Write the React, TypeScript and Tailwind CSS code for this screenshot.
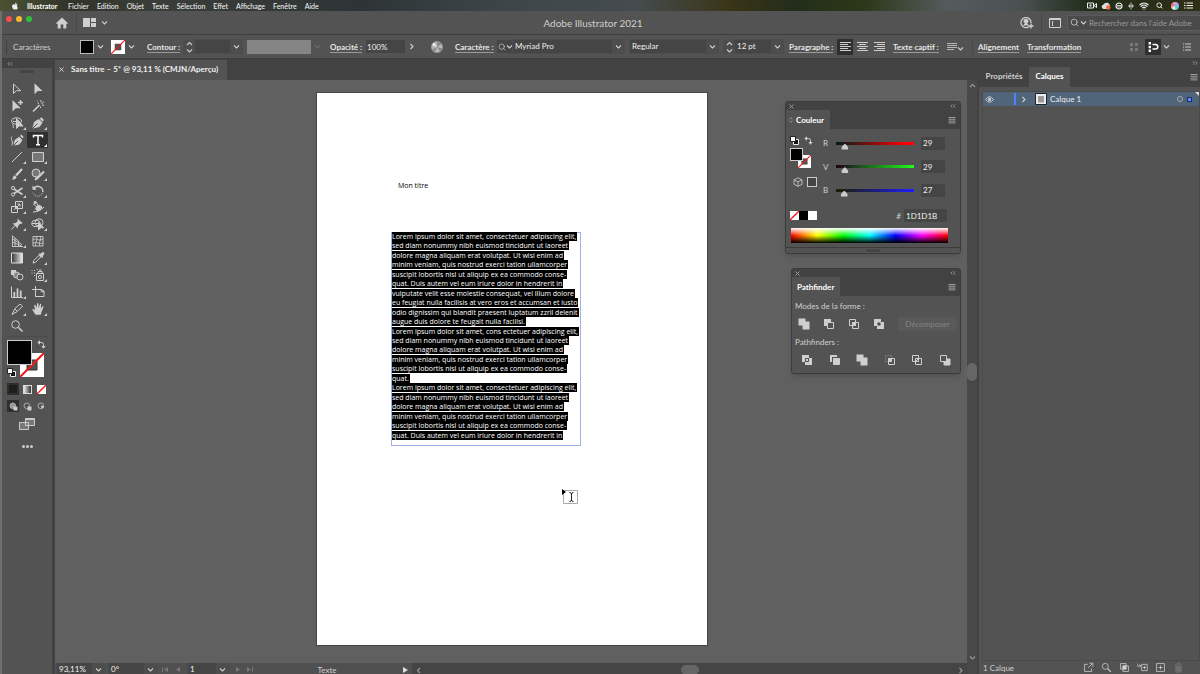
import type { ReactNode } from 'react';
import { Search, Wifi } from 'lucide-react';
import { FaApple } from 'react-icons/fa';

const menus = ['Fichier', 'Edition', 'Objet', 'Texte', 'Sélection', 'Effet', 'Affichage', 'Fenêtre', 'Aide'];

const lines = [
  'Lorem ipsum dolor sit amet, consectetuer adipiscing elit,',
  'sed diam nonummy nibh euismod tincidunt ut laoreet',
  'dolore magna aliquam erat volutpat. Ut wisi enim ad',
  'minim veniam, quis nostrud exerci tation ullamcorper',
  'suscipit lobortis nisl ut aliquip ex ea commodo conse-',
  'quat. Duis autem vel eum iriure dolor in hendrerit in',
  'vulputate velit esse molestie consequat, vel illum dolore',
  'eu feugiat nulla facilisis at vero eros et accumsan et iusto',
  'odio dignissim qui blandit praesent luptatum zzril delenit',
  'augue duis dolore te feugait nulla facilisi.',
  'Lorem ipsum dolor sit amet, cons ectetuer adipiscing elit,',
  'sed diam nonummy nibh euismod tincidunt ut laoreet',
  'dolore magna aliquam erat volutpat. Ut wisi enim ad',
  'minim veniam, quis nostrud exerci tation ullamcorper',
  'suscipit lobortis nisl ut aliquip ex ea commodo conse-',
  'quat.',
  'Lorem ipsum dolor sit amet, consectetuer adipiscing elit,',
  'sed diam nonummy nibh euismod tincidunt ut laoreet',
  'dolore magna aliquam erat volutpat. Ut wisi enim ad',
  'minim veniam, quis nostrud exerci tation ullamcorper',
  'suscipit lobortis nisl ut aliquip ex ea commodo conse-',
  'quat. Duis autem vel eum iriure dolor in hendrerit in',
];

function Chevron({ dir = 'down', className = '' }: { dir?: 'down' | 'up' | 'left' | 'right'; className?: string }) {
  const d = {
    down: 'M1 2.5 3.5 5 6 2.5',
    up: 'M1 5 3.5 2.5 6 5',
    left: 'M5 1 2.5 3.5 5 6',
    right: 'M2.5 1 5 3.5 2.5 6',
  }[dir];
  return (
    <svg viewBox="0 0 7 7" className={`h-[7px] w-[7px] shrink-0 ${className}`} fill="none" stroke="currentColor" strokeWidth="1.1">
      <path d={d} />
    </svg>
  );
}

function Icon({ children, className = 'h-[14px] w-[14px]' }: { children: ReactNode; className?: string }) {
  return (
    <svg viewBox="0 0 14 14" className={`shrink-0 ${className}`} fill="none" stroke="currentColor" strokeWidth="1">
      {children}
    </svg>
  );
}

function Pick({ label, value, className = '' }: { label: string; value: string; className?: string }) {
  return (
    <div className={`flex h-[13px] shrink-0 items-center bg-[#454545] ring-1 ring-[#4c4c4c] ${className}`}>
      <select aria-label={label} className="h-full min-w-0 flex-1 appearance-none bg-transparent pl-[2px] leading-[13px] text-[#f0f0f0] outline-none">
        <option>{value}</option>
      </select>
      <span className="flex h-full w-[12px] items-center justify-center bg-[#4d4d4d]">
        <Chevron />
      </span>
    </div>
  );
}

function Stepper({ label }: { label: string }) {
  return (
    <button aria-label={label} className="flex h-[14px] w-[12px] shrink-0 flex-col items-center justify-center bg-[#4d4d4d]">
      <Chevron dir="up" />
      <Chevron />
    </button>
  );
}

function NoneSwatch({ className }: { className: string }) {
  return (
    <svg viewBox="0 0 12 12" className={`shrink-0 bg-white ${className}`}>
      <path d="M0 12 12 0" stroke="#f01818" strokeWidth="1.8" />
    </svg>
  );
}

function StrokeSwatch({ className }: { className: string }) {
  return (
    <svg viewBox="0 0 24 24" className={`shrink-0 ${className}`}>
      <path d="M0 0h24v24H0z" fill="#fff" />
      <path d="M7 7h10v10H7z" fill="#535353" stroke="#333" />
      <path d="M0 24 24 0" stroke="#f01818" strokeWidth="2" />
    </svg>
  );
}

function Defaults({ className = '' }: { className?: string }) {
  return (
    <svg viewBox="0 0 9 9" className={`h-[9px] w-[9px] shrink-0 ${className}`}>
      <path d="M3.5 3.5h5v5h-5z" fill="#111" stroke="#eee" />
      <path d="M.5.5h5v5h-5z" fill="#fff" stroke="#222" />
    </svg>
  );
}

function Swap({ className = '' }: { className?: string }) {
  return (
    <svg viewBox="0 0 9 9" className={`h-[9px] w-[9px] shrink-0 ${className}`} fill="none" stroke="currentColor">
      <path d="M2 2.5h2.5q2 0 2 2V7" />
      <path d="M3 .3.3 2.5 3 4.7zM4.4 6h4.2L6.5 8.8z" fill="currentColor" stroke="none" />
    </svg>
  );
}

const Menu = () => (
  <svg viewBox="0 0 8 8" className="h-[8px] w-[8px] text-[#a8a8a8]" stroke="currentColor" strokeWidth=".9">
    <path d="M.5 1.5h7M.5 3.3h7M.5 5.1h7M.5 6.9h7" />
  </svg>
);

// Toolbox, two per row
const tools: { name: string; more?: boolean; on?: boolean; draw: ReactNode }[] = [
  { name: 'Sélection', draw: <path d="M3.5 2v9.5l3-2.8h4.2z" /> },
  { name: 'Sélection directe', draw: <path d="M3.5 1.2v11l3.2-3.2h4.8z" fill="currentColor" stroke="none" /> },
  { name: 'Sélection directe progressive', draw: <><path d="M2.5 1v11.5l3.3-3.3h5z" fill="currentColor" stroke="none" /><path d="M10.5 1v5M8 3.5h5" strokeWidth="1.4" /></> },
  { name: 'Baguette magique', draw: <><path d="M2 12.5 8.5 6" strokeWidth="1.6" /><path d="M10 1v2.5M8 5 6.5 3.5M10.5 4.8 13 2.8M11 6.2h2.2M9.5 7.5V9M6 1.5l.8.8" /></> },
  { name: 'Lasso', more: true, draw: <><ellipse cx="6.5" cy="5" rx="5" ry="3.2" /><path d="M3.5 7.2c-2 1.5 1 3-.5 5M3 5.5h5" /><path d="M6.5 2.5v10l2.5-2.6 4 .1z" fill="currentColor" /></> },
  { name: 'Plume', more: true, draw: <><path d="m2 12 1.5-6L8 3.5 11 6.5 8.5 10.5z" fill="currentColor" /><path d="m8.8 2.8 1.5-1.5 2.7 2.7-1.5 1.5z" fill="currentColor" stroke="none" /><path d="M2 12 6.5 7.5" stroke="#535353" /></> },
  { name: 'Courbure', draw: <><path d="M1.5 12.5c3-3-2-7 .5-9" /><path d="m4 12 1.2-5 4-2.7 2.8 2.8-2.8 4z" fill="currentColor" /><path d="m10 3 1.2-1.5 2.5 2.5L12.5 5.3z" fill="currentColor" stroke="none" /><path d="M4 12 8 8" stroke="#535353" /></> },
  { name: 'Texte', more: true, on: true, draw: <path d="M2.5 4.5v-2h9v2M7 2.5v9.2M5 11.7h4" strokeWidth="1.5" /> },
  { name: 'Trait', more: true, draw: <path d="M2 12 12 2" /> },
  { name: 'Rectangle', more: true, draw: <path d="M1.5 2.5h11v9h-11z" fill="#777" /> },
  { name: 'Pinceau', more: true, draw: <><path d="M6 8.5 12 2" strokeWidth="2.2" /><path d="M1.5 12.5c2-.5 1-3 3-4.2l2.2 2c-.7 2-3.3 2.6-5.2 2.2z" fill="currentColor" stroke="none" /></> },
  { name: 'Shaper', more: true, draw: <><circle cx="5" cy="6" r="4" fill="#777" /><path d="M6 11.5 13 4.5" strokeWidth="2.2" /><path d="m4 13 1-2.5 1.5 1.5z" fill="currentColor" /></> },
  { name: 'Ciseaux', more: true, draw: <><path d="M4 5 12.5 10.5M4 9.5 12.5 4" strokeWidth="1.5" /><circle cx="3" cy="4" r="1.6" /><circle cx="3" cy="10.5" r="1.6" /></> },
  { name: 'Rotation', more: true, draw: <><path d="M3 4.2a5 5 0 0 1 8.8 4" strokeWidth="1.4" /><path d="M11.5 9A5 5 0 0 1 2 8.5" strokeDasharray="1 1" /><path d="M1.5 1.5v4.2h4.2z" fill="currentColor" stroke="none" /></> },
  { name: 'Mise à l’échelle', more: true, draw: <path d="M5.5 1.5h7v7h-7zM1.5 6.5h6v6h-6zM4 10l6-6M7.3 4H10v2.7" /> },
  { name: 'Largeur', more: true, draw: <><path d="M2 12c5 0 8-2 11-5M2 4c3 1 4 4 8 6M5 1.5l2 4-3 4" /><path d="m5 7 3-2 3 2-2 3-3 1z" fill="currentColor" /><circle cx="4" cy="2.5" r="1" fill="currentColor" /></> },
  { name: 'Punaise', more: true, draw: <><path d="m7.5 1.5 5 4.5-1.2 1-1.2-.2L8 9l-.3 2.5-5-5L5.5 6 8 4l-.5-1z" fill="currentColor" stroke="none" /><path d="M5 8.5 1.5 12.5" /></> },
  { name: 'Concepteur de formes', more: true, draw: <><ellipse cx="5" cy="6.5" rx="4.2" ry="3.2" /><ellipse cx="8" cy="5.5" rx="4" ry="3.7" /><path d="M1 6.5h7" /><path d="M7.5 5v8l2-2.2h3.2z" fill="currentColor" /></> },
  { name: 'Grille de perspective', more: true, draw: <path d="M2.5 1.5v11M2 12.5h11M2.5 2 8.5 7v5.5M2.5 5l9.5 5.5M2.5 8 12 12.3M5 3.8v8.7" strokeWidth=".9" /> },
  { name: 'Filet', draw: <path d="M2 2.5h10v9.5H2zM2 6c4-3 5 2 10-1M2 9.5c4-3 6 2 10-1M5 2.5c3 3-2 6 0 9.5M9 2.5c2 3-2 6 0 9.5" strokeWidth=".9" /> },
  { name: 'Dégradé', draw: <path d="M1.5 2h11v10h-11z" fill="url(#tool-fade)" stroke="#ddd" /> },
  { name: 'Pipette', more: true, draw: <><path d="m2 12 .8-2.5L8 4.3 9.8 6 4.5 11.3z" /><path d="m7.5 3.2 1.2-1 .8.6c1-1.6 3-2 3.5-1.2s.2 2.5-1.4 3.5l.6 1-1.2 1z" fill="currentColor" stroke="none" /></> },
  { name: 'Dégradé de formes', draw: <><path d="M1 2h5v5H1z" fill="currentColor" stroke="none" /><circle cx="6.5" cy="7" r="3" fill="#888" /><circle cx="10" cy="9" r="3" fill="#535353" /></> },
  { name: 'Pulvérisation de symboles', more: true, draw: <><path d="M5.5 5.5h7v7h-7zM7 3.5h4v2H7zM8 2h2.5" /><circle cx="9" cy="9" r="1.6" /><path d="M.5 2.5h1M3 2.5h1M.5 5h1M3 5h1M3 7.5h1M5.5 1.5h1" strokeWidth="1.2" /></> },
  { name: 'Graphe', more: true, draw: <><path d="M1.5 1.5v11H13" /><path d="M4.3 12V7M7.5 12V3.5M10.7 12V5.5" strokeWidth="1.8" /></> },
  { name: 'Plan de travail', draw: <path d="M4.5 1v10.5h8.5V6L10.5 4.5H1M10.3 4.5V6.8H13" /> },
  { name: 'Tranche', more: true, draw: <><path d="m2 12.5 3-6L10 2l2.5 2.2-5.2 5.3z" /><path d="M5 7l2 2" /></> },
  { name: 'Main', more: true, draw: <path d="M4.5 12.8 1.5 8c-.4-1 .6-1.4 1.3-.7L4 8.3 3.2 3.5c0-1 1.2-1 1.4-.2L5.7 6 6 1.8c.1-1 1.4-1 1.5 0L7.8 6l1-3.6c.3-1 1.5-.7 1.4.2L9.8 6.6l1.5-2c.5-.8 1.5-.3 1.2.5L10.5 10 9.8 12.8z" fill="currentColor" stroke="none" /> },
  { name: 'Zoom', draw: <><circle cx="5.5" cy="5.5" r="3.8" /><path d="m8.5 8.5 4 4" strokeWidth="1.6" /></> },
];

function Toolbox() {
  return (
    <aside className="flex w-[50px] shrink-0 flex-col bg-[#535353] text-[#cfcfcf]">
      <svg className="absolute h-0 w-0">
        <defs>
          <linearGradient id="tool-fade">
            <stop offset="0" stopColor="#333" />
            <stop offset="1" stopColor="#eee" />
          </linearGradient>
        </defs>
      </svg>
      <div className="flex h-[9px] items-center bg-[#424242] pl-[5px] text-[#999]">
        <Collapse dir="left" />
      </div>
      <div className="mx-auto mt-[2px] h-[3px] w-[14px] bg-[#444]" />
      <div className="mt-2 grid h-[253px] auto-rows-fr grid-cols-[21px_21px] pl-1">
        {tools.map((t) => (
          <button key={t.name} aria-label={t.name} className={`grid place-items-center ${t.on ? 'bg-[#2f2f2f] text-white' : ''}`}>
            <span className="relative">
              <Icon>{t.draw}</Icon>
              {t.more && (
                <svg viewBox="0 0 3 3" className="absolute -right-[2px] bottom-0 h-[3px] w-[3px]">
                  <path d="M3 0v3H0z" fill="currentColor" />
                </svg>
              )}
            </span>
          </button>
        ))}
      </div>
      <div className="mx-1 mt-[2px] border-t border-[#4b4b4b]" />
      <div className="relative mx-[5px] mt-[3px] h-[37px]">
        <span className="absolute top-0 left-0 z-10 h-[25px] w-[25px] border border-[#ccc] bg-black" />
        <StrokeSwatch className="absolute top-[13px] left-[13px] h-[24px] w-[24px]" />
        <Swap className="absolute top-0 right-px" />
        <Defaults className="absolute bottom-0 left-0" />
      </div>
      <div className="mt-[6px] flex gap-[2px] pl-[5px]">
        <button aria-label="Couleur" className="grid h-[12px] w-[12px] place-items-center bg-[#2f2f2f]">
          <span className="h-2 w-2 bg-[#1d1d1b]" />
        </button>
        <button aria-label="Dégradé linéaire" className="grid h-[12px] w-[12px] place-items-center">
          <span className="h-[9px] w-[9px] border border-[#ddd] bg-linear-to-r from-[#eee] to-[#333]" />
        </button>
        <button aria-label="Sans" className="grid h-[12px] w-[12px] place-items-center">
          <NoneSwatch className="h-[9px] w-[9px]" />
        </button>
      </div>
      <div className="mt-[5px] flex gap-[2px] pl-[5px]">
        {['Dessin normal', 'Dessin arrière', 'Dessin intérieur'].map((n, i) => (
          <button key={n} aria-label={n} className={`grid h-[12px] w-[12px] place-items-center ${i === 0 ? 'bg-[#2f2f2f]' : ''}`}>
            <svg viewBox="0 0 9 9" className="h-[9px] w-[9px]">
              <circle cx="3.8" cy="3.8" r="2.8" fill={i === 0 ? '#999' : 'none'} stroke="#aaa" />
              {i < 2 && <path d="M4.5 4.5h4v4h-4z" fill="#ccc" />}
              {i === 2 && <path d="M3.8 3.8h3v2l-2 1z" fill="#ccc" />}
            </svg>
          </button>
        ))}
      </div>
      <button aria-label="Mode d’affichage" className="mx-auto mt-[6px]">
        <svg viewBox="0 0 16 12" className="h-[12px] w-[16px]" fill="#777" stroke="#ccc">
          <path d="M.5 4.5h9v7h-9zM6.5.5h9v7h-9z" />
          <path d="M6.5 1.2h9" strokeWidth="1.5" />
        </svg>
      </button>
      <button aria-label="Modifier la barre d’outils" className="mx-auto mt-[11px] flex gap-[1px] py-1">
        {[0, 1, 2].map((i) => (
          <span key={i} className="h-[3px] w-[3px] rounded-full bg-[#ccc]" />
        ))}
      </button>
    </aside>
  );
}

function Collapse({ dir }: { dir: 'left' | 'right' }) {
  return (
    <svg viewBox="0 0 6 4" className="h-[4px] w-[6px]" fill="none" stroke="currentColor" strokeWidth=".9">
      {dir === 'left' ? <path d="M2.5.3.8 2l1.7 1.7M5.2.3 3.5 2l1.7 1.7" /> : <path d="M.8.3 2.5 2 .8 3.7M3.5.3 5.2 2 3.5 3.7" />}
    </svg>
  );
}

function MacMenuBar() {
  return (
    <nav className="flex h-[11px] shrink-0 items-center bg-[linear-gradient(90deg,#4c5132_0%,#30342a_6%,#3a3e39_13%,#2e3436_30%,#3d474a_43%,#454b4e_53%,#3a3417_61%,#222d1a_66%,#2c3818_72%,#555b5d_79%,#4b5152_85%,#1f2b18_91%,#2f3016_100%)] pl-[11px] text-[7px] leading-[10px] font-medium text-[#eee]">
      <FaApple size={8} />
      <a href="#" className="ml-[8px] w-[41px] font-bold text-white">Illustrator</a>
      <div className="flex gap-[8px] whitespace-nowrap">
        {menus.map((m) => (
          <a key={m} href="#">{m}</a>
        ))}
      </div>
      <div className="ml-auto flex items-center gap-[4px] pr-[7px]">
        <svg viewBox="0 0 10 7" className="h-[7px] w-[10px]" fill="none" stroke="currentColor">
          <path d="M.5 1h6v5h-6zM7 3.5 9.5 1.5v4z" />
          <path d="M2.500 2.500h2v2h-2z" fill="currentColor" stroke="none" />
        </svg>
        <svg viewBox="0 0 10 8" className="h-[8px] w-[10px]">
          <path d="M2.5 7a2.3 2.3 0 0 1 0-4.5 3.5 3.5 0 0 1 6.5 1.5V7z" fill="#ddd" />
          <circle cx="7.3" cy="5.5" r="2.2" fill="#f26a3b" />
        </svg>
        <svg viewBox="0 0 8 8" className="h-[8px] w-[8px]" fill="none" stroke="currentColor" strokeWidth="1.2">
          <circle cx="4" cy="4" r="3" />
          <path d="M2 3.5h4M2 5h4" strokeWidth=".8" />
        </svg>
        <svg viewBox="0 0 8 8" className="h-[8px] w-[8px]" stroke="#bbb">
          <path d="M4 .5v7M2.5 2.5v3M5.5 2.5v3M1 4h6" />
        </svg>
        <Wifi size={10} strokeWidth={3} />
        <Search size={7} strokeWidth={3} className="ml-[3px]" />
        <span className="ml-[4px] h-2 w-2 rounded-full bg-[conic-gradient(#e8a0c8,#7fb7ff,#5ad0c0,#f4f4f4,#e86f7f,#e8a0c8)]" />
        <svg viewBox="0 0 9 7" className="ml-px h-[7px] w-[9px]" stroke="currentColor" strokeWidth="1.2">
          <path d="M0 1h1.5M2.5 1H9M0 3.5h1.5M2.5 3.5H9M0 6h1.5M2.5 6H9" />
        </svg>
      </div>
    </nav>
  );
}

function TitleBar() {
  return (
    <header className="grid h-6 shrink-0 grid-cols-[1fr_auto_1fr] items-center border-b border-[#3f3f3f] bg-[#535353] text-[#cfcfcf]">
      <div className="flex h-full items-center">
        <div className="flex gap-1 self-start pt-[5px] pl-1">
          <button aria-label="Fermer" className="h-[6px] w-[6px] rounded-full bg-[#f4504a]" />
          <button aria-label="Réduire" className="h-[6px] w-[6px] rounded-full bg-[#f5b82e]" />
          <button aria-label="Agrandir" className="h-[6px] w-[6px] rounded-full bg-[#2fc23c]" />
        </div>
        <button aria-label="Accueil" className="ml-[24px]">
          <svg viewBox="0 0 12 11" className="h-[12px] w-[12px]" fill="currentColor">
            <path d="M6 0 0 5.7l.9.9.8-.7V11h3V7h2.6v4h3V5.900l.8.7.9-.9z" />
          </svg>
        </button>
        <span className="ml-2 h-5 w-px bg-[#484848]" />
        <button aria-label="Disposition" className="ml-[6px] flex items-center gap-[5px]">
          <svg viewBox="0 0 13 9" className="h-[9px] w-[13px]" fill="currentColor">
            <path d="M0 0h7v9H0zM8 0h5v4H8zM8 5h5v4H8z" />
          </svg>
          <Chevron />
        </button>
      </div>
      <h1 className="pr-4 text-[10px] leading-[12px]">Adobe Illustrator 2021</h1>
      <div className="flex items-center justify-end">
        <button aria-label="Compte">
          <svg viewBox="0 0 14 13" className="h-[13px] w-[14px]" fill="none" stroke="currentColor" strokeWidth="1.3">
            <path d="M9.5 10.2A5 5 0 1 1 11 7" />
            <path d="M6 3a2 2 0 0 0-1 4L3 9.5h6L7 7a2 2 0 0 0-1-4z" fill="currentColor" stroke="none" />
            <path d="M11 7.5v5M8.5 10h5" />
          </svg>
        </button>
        <span className="ml-[7px] h-5 w-px bg-[#484848]" />
        <button aria-label="Espace de travail" className="ml-[7px]">
          <svg viewBox="0 0 12 10" className="h-[10px] w-[12px]" fill="none" stroke="currentColor">
            <path d="M.5.5h11v9H.5zM.5 1.5h11M3.5 3v5" />
          </svg>
        </button>
        <label className="ml-[7px] flex h-[14px] items-center gap-[1px] bg-[#4a4a4a] pl-[2px] ring-1 ring-[#5b5b5b]">
          <Search size={9} />
          <Chevron className="w-[6px]" />
          <input aria-label="Rechercher" placeholder="Rechercher dans l’aide Adobe" className="w-[112px] bg-transparent pl-px text-[8px] outline-none placeholder:text-[#999]" />
        </label>
      </div>
    </header>
  );
}

const barLink = 'shrink-0 border-b border-[#999] text-left leading-[9px] font-bold text-[#e6e6e6] whitespace-nowrap';

function AlignIcon({ kind }: { kind: 'left' | 'center' | 'right' }) {
  const d = {
    left: 'M0 .5h11M0 2.5h8M0 4.5h11M0 6.5h8M0 8.5h11',
    center: 'M0 .5h11M2 2.5h7M0 4.5h11M2 6.5h7M0 8.5h11',
    right: 'M0 .5h11M3 2.5h8M0 4.5h11M3 6.5h8M0 8.5h11',
  }[kind];
  return (
    <svg viewBox="0 0 11 9" className="h-[9px] w-[11px]" stroke="currentColor">
      <path d={d} />
    </svg>
  );
}

function ControlBar() {
  return (
    <div className="flex h-6 shrink-0 items-center border-b border-[#3d3d3d] bg-[#535353] text-[8px] text-[#cfcfcf]">
      <span className="ml-1 h-[14px] w-px bg-[#404040]" />
      <span className="ml-[6px] w-[67px]">Caractères</span>
      <button aria-label="Fond" className="h-[14px] w-[14px] border border-[#bbb] bg-black" />
      <button aria-label="Choisir le fond" className="ml-[3px]"><Chevron /></button>
      <button aria-label="Contour" className="ml-[7px]"><StrokeSwatch className="h-[14px] w-[14px]" /></button>
      <button aria-label="Choisir le contour" className="ml-[3px]"><Chevron /></button>
      <div className="ml-[12px] w-[36px]"><button className={barLink}>Contour :</button></div>
      <Stepper label="Épaisseur" />
      <Pick label="Épaisseur du contour" value="" className="w-[47px]" />
      <span className="ml-[5px] h-[14px] w-[64px] bg-[#858585]" />
      <Chevron className="ml-[3px] text-[#6c6c6c]" />
      <div className="ml-[9px] w-[36px]"><button className={barLink}>Opacité :</button></div>
      <input aria-label="Opacité" defaultValue="100%" className="h-[13px] w-[39px] bg-[#454545] pl-px text-[#f0f0f0]" />
      <button aria-label="Plus" className="ml-[3px]"><Chevron dir="right" /></button>
      <button aria-label="Redéfinir les couleurs" className="ml-[16px]">
        <svg viewBox="0 0 12 12" className="h-[12px] w-[12px]">
          <circle cx="6" cy="6" r="5.5" fill="#b8b8b8" stroke="#999" />
          <path d="M6 6 6 .5a5.500 5.500 0 0 1 4.500 2.500zM6 6l5.300 1.500-2 2.800zM6 6 4 11 1.500 8.500z" fill="#888" />
          <path d="M6 6 1 4l2-2.500z" fill="#eee" />
        </svg>
      </button>
      <div className="ml-[12px] w-[42px]"><button className={barLink}>Caractère :</button></div>
      <span className="flex h-[13px] items-center bg-[#454545] pl-[1px]">
        <Search size={8} />
        <Chevron className="w-[6px]" />
      </span>
      <Pick label="Police" value="Myriad Pro" className="w-[111px]" />
      <Pick label="Style" value="Regular" className="ml-[6px] w-[88px]" />
      <span className="w-[5px]" />
      <Stepper label="Corps" />
      <Pick label="Corps de police" value="12 pt" className="w-[48px]" />
      <div className="ml-[6px] w-[48px]"><button className={barLink}>Paragraphe :</button></div>
      <button aria-label="Aligner à gauche" className="grid h-4 w-4 place-items-center bg-[#2f2f2f]"><AlignIcon kind="left" /></button>
      <button aria-label="Centrer" className="grid h-4 w-[18px] place-items-center"><AlignIcon kind="center" /></button>
      <button aria-label="Aligner à droite" className="grid h-4 w-[17px] place-items-center"><AlignIcon kind="right" /></button>
      <div className="ml-[5px] w-[54px]"><button className={barLink}>Texte captif :</button></div>
      <button aria-label="Options de texte captif" className="flex items-center">
        <svg viewBox="0 0 10 8" className="h-[8px] w-[10px]" stroke="currentColor"><path d="M0 .5h10M0 2.5h10M0 4.5h10M0 6.5h7" strokeWidth=".8" /></svg>
        <Chevron className="mt-1" />
      </button>
      <span className="ml-[8px] h-[14px] w-px bg-[#484848]" />
      <div className="ml-[5px] w-[49px]"><button className={barLink}>Alignement</button></div>
      <div><button className={barLink}>Transformation</button></div>
      <div className="ml-auto flex items-center pr-[9px]">
        <svg viewBox="0 0 8 8" className="h-[8px] w-[8px]" fill="#777">
          <path d="M0 0h3v3H0zM5 0h3v3H5zM0 5h3v3H0zM5 5h3v3H5z" />
        </svg>
        <button aria-label="Magnétisme" className="ml-[7px] grid h-4 w-[16px] place-items-center bg-[#2f2f2f] text-white">
          <svg viewBox="0 0 11 10" className="h-[10px] w-[11px]" fill="none" stroke="currentColor" strokeWidth="1.5">
            <path d="M1.8 0v2.5M1.8 3.700v2.500M1.800 7.500V10" strokeWidth="2.4" />
            <path d="M4.500 2.500h3a2.300 2.300 0 0 1 0 4.600h-3" />
          </svg>
        </button>
        <Chevron className="ml-[2px]" />
        <button aria-label="Préférences" className="ml-[13px]">
          <svg viewBox="0 0 8 8" className="h-[8px] w-[8px]" stroke="currentColor">
            <path d="M0 1h1.200M2.200 1H8M0 4h1.200M2.200 4H8M0 7h1.200M2.200 7H8" />
          </svg>
        </button>
      </div>
    </div>
  );
}

function Palette({ title, className, children, sort }: { title: string; className: string; children: ReactNode; sort?: boolean }) {
  return (
    <section className={`rounded-[3px] border border-[#3c3c3c] bg-[#535353] text-[#cfcfcf] shadow-md ${className}`}>
      <div className="flex h-[8px] items-center justify-between bg-[#424242] pr-1 pl-[3px] text-[#999]">
        <button aria-label={`Fermer ${title}`}>
          <svg viewBox="0 0 5 5" className="h-[5px] w-[5px]" stroke="currentColor"><path d="m.5.5 4 4M4.500.5l-4 4" /></svg>
        </button>
        <Collapse dir="left" />
      </div>
      <div className="flex h-[19px] items-center justify-between bg-[#424242] pr-1">
        <h2 className={`flex h-full items-center gap-[3px] bg-[#535353] pr-[6px] text-[8px] font-bold text-white ${sort ? 'pl-[3px]' : 'pl-[5px]'}`}>
          {sort && (
            <svg viewBox="0 0 4 6" className="h-[6px] w-[4px]" fill="none" stroke="#aaa" strokeWidth=".8"><path d="M.5 2.300 2 .8l1.500 1.500M.5 3.700 2 5.200l1.500-1.500" /></svg>
          )}
          {title}
        </h2>
        <button aria-label={`Menu ${title}`}><Menu /></button>
      </div>
      {children}
    </section>
  );
}

const channels = [
  { name: 'R', value: 29, track: '[&::-webkit-slider-runnable-track]:bg-[linear-gradient(90deg,#001d1b,#f00_90%)]' },
  { name: 'V', value: 29, track: '[&::-webkit-slider-runnable-track]:bg-[linear-gradient(90deg,#1d001b,#1dff1b)]' },
  { name: 'B', value: 27, track: '[&::-webkit-slider-runnable-track]:bg-[linear-gradient(90deg,#1d1d00,#1d1dff)]' },
];

function ColorPalette() {
  return (
    <Palette title="Couleur" className="w-[176px]" sort>
      <div className="flex pt-[7px] pl-1">
        <div className="w-[31px]">
          <div className="flex gap-[5px]">
            <Defaults />
            <Swap />
          </div>
          <div className="relative mt-[3px] h-[20px]">
            <span className="absolute top-0 left-0 z-10 h-[13px] w-[13px] border border-[#ccc] bg-black" />
            <StrokeSwatch className="absolute top-[7px] left-[8px] h-[13px] w-[13px]" />
          </div>
          <div className="mt-[9px] flex items-center gap-[4px] pl-[3px]">
            <svg viewBox="0 0 10 10" className="h-[10px] w-[10px]" fill="none" stroke="currentColor" strokeWidth=".8">
              <path d="M5 .8 9 2.800v4.500L5 9.300 1 7.300V2.800zM1 2.800l4 2 4-2M5 4.800v4.500" />
            </svg>
            <span className="h-[10px] w-[10px] border border-[#ccc] bg-[#444]" />
          </div>
        </div>
        <div className="flex h-[61px] flex-1 flex-col justify-between">
          {channels.map((c) => (
            <div key={c.name} className="flex h-[14px] items-center text-[8px]">
              <label htmlFor={`ch-${c.name}`} className="w-[11px] pl-[2px]">{c.name}</label>
              <input
                id={`ch-${c.name}`}
                type="range"
                min={0}
                max={255}
                defaultValue={c.value}
                className={`h-[14px] w-[86px] appearance-none bg-transparent [&::-webkit-slider-runnable-track]:h-[3px] [&::-webkit-slider-runnable-track]:bg-size-[78px_3px] [&::-webkit-slider-runnable-track]:bg-center [&::-webkit-slider-runnable-track]:bg-no-repeat [&::-webkit-slider-thumb]:mt-[2px] [&::-webkit-slider-thumb]:h-[6px] [&::-webkit-slider-thumb]:w-2 [&::-webkit-slider-thumb]:appearance-none [&::-webkit-slider-thumb]:bg-[#ccc] [&::-webkit-slider-thumb]:[clip-path:polygon(50%_0,90%_60%,90%_100%,10%_100%,10%_60%)] ${c.track}`}
              />
              <input aria-label={`Valeur ${c.name}`} defaultValue={c.value} className="ml-[3px] h-[13px] w-[24px] bg-[#454545] pl-[2px] text-[#f0f0f0]" />
            </div>
          ))}
        </div>
      </div>
      <div className="mt-[12px] flex h-[13px] items-center pr-[13px] pl-1">
        <NoneSwatch className="h-[9px] w-[9px]" />
        <span className="h-[9px] w-[9px] bg-black" />
        <span className="h-[9px] w-[9px] bg-white" />
        <label htmlFor="hex" className="ml-auto pr-[3px] text-[8px] leading-[10px] italic">#</label>
        <input id="hex" defaultValue="1D1D1B" className="h-[13px] w-[43px] bg-[#454545] pl-[2px] text-[8px] text-[#f0f0f0]" />
      </div>
      <div className="mt-[6px] mr-[12px] ml-[5px] h-[15px] bg-[linear-gradient(180deg,#fff_0%,#ffffff00_50%,#00000000_50%,#000_100%),linear-gradient(90deg,#f00,#ff0,#0f0,#0ff,#00f,#f0f,#f00)]" />
      <div className="mt-1 flex h-[6px] items-center justify-center border-t border-[#3c3c3c]">
        <span className="h-[3px] w-[14px] bg-[#444]" />
      </div>
    </Palette>
  );
}

const shapeModes = [
  { name: 'Réunion', d: <path d="M.5.5h7v3h4v8h-7v-4h-4z" fill="currentColor" stroke="none" /> },
  { name: 'Soustraction', d: <><path d="M1 1h7v3H4v4H1z" fill="currentColor" stroke="none" /><path d="M4.5 4.5h6v6h-6z" /></> },
  { name: 'Intersection', d: <><path d="M1.5 1.5h6v6h-6zM4.5 4.5h6v6h-6z" /><path d="M4.5 4.5h3v3h-3z" fill="currentColor" /></> },
  { name: 'Exclusion', d: <><path d="M1 1h7v7H1z" fill="currentColor" stroke="none" /><path d="M4 4h7v7H4z" fill="currentColor" stroke="none" /><path d="M4.5 4.5h3v3h-3z" fill="#444" stroke="none" /></> },
];

const pathfinders = [
  { name: 'Division', d: <><path d="M1 1h7v3h3v7H4V8H1z" fill="currentColor" stroke="none" /><path d="M4.5 8V4.500H8M4.500 7.500h3v-3" stroke="#535353" /></> },
  { name: 'Fond', d: <><path d="M1 1h7v2H3v5H1z" fill="currentColor" stroke="none" /><path d="M4.5 4.500h6v6h-6z" fill="currentColor" /></> },
  { name: 'Fusion', d: <path d="M.5.5h7v3h4v8h-7v-4h-4z" fill="currentColor" stroke="none" /> },
  { name: 'Coupe', d: <><path d="M1.5 1.5h6v6h-6z" stroke="#888" strokeDasharray="1 1" /><path d="M4.5 4.5h6v6h-6z" /><path d="M4.5 4.5h3v3h-3z" fill="currentColor" /></> },
  { name: 'Contour', d: <path d="M1.5 1.5h6v6h-6zM4.5 4.5h6v6h-6zM5 7l2-2" /> },
  { name: 'Soustraction arrière', d: <><path d="M5 5h6v6H5z" fill="currentColor" /><path d="M1.5 1.5h6v6h-6z" fill="#535353" /></> },
];

function PathfinderPalette() {
  const icon = (p: { name: string; d: ReactNode }) => (
    <button key={p.name} aria-label={p.name}>
      <svg viewBox="0 0 12 12" className="h-[12px] w-[12px]" fill="none" stroke="currentColor">{p.d}</svg>
    </button>
  );
  return (
    <Palette title="Pathfinder" className="w-[170px]">
      <div className="px-[3px] pt-1 pb-[7px] text-[8px] leading-[12px]">
        <p>Modes de la forme :</p>
        <div className="mt-[5px] flex h-[14px] items-center gap-[13px] pl-[3px]">
          {shapeModes.map(icon)}
          <button disabled className="ml-auto h-[14px] w-[60px] bg-[#595959] text-[#858585]">Décomposer</button>
        </div>
        <p className="mt-[5px]">Pathfinders :</p>
        <div className="mt-[6px] flex items-center justify-between px-[6px]">{pathfinders.map(icon)}</div>
      </div>
    </Palette>
  );
}

function Artboard() {
  return (
    <article className="relative h-[552px] w-[390px] bg-white px-[74px] pt-[88px] font-['Open_Sans',sans-serif] text-[7px] text-black outline outline-[#444]">
      <h3 className="pl-[7px] leading-[10px]">Mon titre</h3>
      <div className="mt-[41px] h-[214px] w-[190px] border border-[#9db2e8]">
        <div className="-mt-px grid h-[208px] auto-rows-fr text-white">
          {lines.map((l, i) => (
            <p key={i} className="h-full leading-[9px] whitespace-nowrap">
              <span className="inline-block h-[9px] bg-black pr-[1px]">{l}</span>
            </p>
          ))}
        </div>
      </div>
      <svg viewBox="0 0 16 15" className="absolute top-[396px] left-[245px] h-[15px] w-[16px]" fill="none">
        <path d="M1.5 1.5h14v13h-14z" stroke="#aaa" />
        <path d="M0 0v6l4-3z" fill="#000" />
        <path d="M7.5 3.500q2 0 2 1.500v6q0 1.500-2 1.500M11.500 3.500q-2 0-2 1.500M11.500 12.500q-2 0-2-1.500" stroke="#222" />
      </svg>
    </article>
  );
}

function Skip({ d }: { d: string }) {
  return (
    <svg viewBox="0 0 7 7" className="h-[7px] w-[7px]" fill="currentColor">
      <path d={d} />
    </svg>
  );
}

function StatusBar() {
  return (
    <footer className="flex h-[11px] shrink-0 items-start overflow-hidden bg-[#505050] pl-[2px] text-[8px] text-[#cfcfcf]">
      <Pick label="Zoom" value="93,11%" className="w-[47px]" />
      <Pick label="Rotation" value="0°" className="ml-[5px] w-[47px]" />
      <div className="flex h-[13px] items-center gap-[6px] px-[6px] text-[#777]">
        <button aria-label="Premier"><Skip d="M0 1h1v5H0zM6 1v5L2 3.5z" /></button>
        <button aria-label="Précédent"><Skip d="M5 1v5L1 3.5z" /></button>
      </div>
      <Pick label="Plan de travail" value="1" className="w-[40px]" />
      <div className="flex h-[13px] items-center gap-[5px] px-[6px] text-[#777]">
        <button aria-label="Suivant"><Skip d="M2 1v5l4-2.5z" /></button>
        <button aria-label="Dernier"><Skip d="M1 1v5l4-2.500zM6 1h1v5H6z" /></button>
      </div>
      <span className="w-[144px] pr-2 text-center leading-[14px]">Texte</span>
      <svg viewBox="0 0 5 6" className="mt-[4px] h-[6px] w-[5px]"><path d="M0 0v6l5-3z" fill="#ddd" /></svg>
      <div className="ml-[4px] flex h-[14px] flex-1 items-center bg-[#454545] px-[3px] text-[#999]">
        <Chevron dir="left" />
        <span className="mx-auto h-[10px] w-[18px] rounded-full bg-[#666]" />
        <Chevron dir="right" />
      </div>
    </footer>
  );
}

function LayersPanel() {
  return (
    <aside className="ml-[2px] flex w-[221px] shrink-0 flex-col bg-[#535353] text-[8px] text-[#cfcfcf]">
      <div className="flex h-[8px] items-center justify-end bg-[#424242] pr-[2px] text-[#999]"><Collapse dir="right" /></div>
      <div role="tablist" className="flex h-[20px] items-stretch bg-[#424242] font-bold">
        <button role="tab" className="w-[50px] pb-[2px]">Propriétés</button>
        <button role="tab" aria-selected="true" className="w-[41px] bg-[#535353] pb-[2px] text-white">Calques</button>
        <button aria-label="Menu" className="mr-[2px] ml-auto"><Menu /></button>
      </div>
      <div className="ml-[3px] mt-1 flex-1 border border-[#4a4a4a]">
        <div className="flex h-[14px] items-center bg-[#50657a]">
          <button aria-label="Visibilité" className="w-[31px] pl-[2px]">
            <svg viewBox="0 0 9 7" className="h-[7px] w-[9px]" fill="none" stroke="currentColor">
              <path d="M.5 3.500q4-5.500 8 0-4 5.500-8 0z" />
              <circle cx="4.500" cy="3.500" r="1.300" fill="currentColor" />
            </svg>
          </button>
          <span className="h-[12px] w-[2px] bg-[#4f80ff]" />
          <Chevron dir="right" className="ml-[4px]" />
          <svg viewBox="0 0 12 12" className="ml-[8px] h-[12px] w-[12px]">
            <path d="M.5.5h11v11H.5z" fill="#eee" stroke="#222" />
            <path d="M3 3h6v6.5H3z" fill="#999" />
          </svg>
          <span className="ml-[3px] text-[#eee]">Calque 1</span>
          <span className="ml-auto h-[6px] w-[6px] rounded-full border border-[#aaa]" />
          <span className="ml-1 h-[5px] w-[5px] border border-[#1b2f70] bg-[#5b8cff]" />
          <svg viewBox="0 0 4 4" className="ml-[3px] h-[4px] w-[4px] self-start">
            <path d="M0 0h4v4z" fill="#ddd" />
          </svg>
        </div>
      </div>
      <div className="flex h-[13px] items-center pl-1">
        <span>1 Calque</span>
        <div className="ml-auto flex items-center gap-[7px] pr-[16px]">
          <Icon className="h-[11px] w-[11px]"><path d="M6 3H2v9h9V8M8 1.500h4.500V6M12.500 1.500 6.500 7.500" /></Icon>
          <Icon className="h-[11px] w-[11px]"><circle cx="5.500" cy="5.500" r="3.800" /><path d="m8.500 8.500 4 4" strokeWidth="1.600" /></Icon>
          <Icon className="h-[11px] w-[11px]"><path d="M2 2h7v7H2zM5 5h7v7H5z" /><path d="M5 5h4v4H5z" fill="currentColor" /></Icon>
          <Icon className="h-[11px] w-[11px]"><path d="M0 2v3h4M3 3l2 2-2 2M6 3h7v8H6zM9.500 5v4M7.500 7h4" /></Icon>
          <Icon className="h-[11px] w-[11px]"><path d="M2 2h10v10H2zM7 4.500v5M4.500 7h5" /></Icon>
          <Icon className="h-[11px] w-[11px] text-[#6d6d6d]"><path d="M2 3.500h10M5 3V1.500h4V3M3 5h8l-.5 8h-7z" fill="currentColor" /></Icon>
        </div>
      </div>
    </aside>
  );
}

export default function App() {
  return (
    <div className="flex h-screen flex-col overflow-hidden bg-[#424242] font-['Lato','Noto_Sans',sans-serif]">
      <MacMenuBar />
      <div className="flex min-h-0 flex-1 flex-col border-l-2 border-[#6d7068]">
        <TitleBar />
        <ControlBar />
        <div className="flex min-h-0 flex-1">
          <Toolbox />
          <main className="ml-[3px] flex min-w-0 flex-1 flex-col">
            <div className="flex h-[21px] items-end">
              <div className="flex h-[20px] items-center gap-[7px] bg-[#535353] pr-[9px] pb-[2px] pl-1 text-[8px] font-bold text-[#f0f0f0]">
                <button aria-label="Fermer le document">
                  <svg viewBox="0 0 5 5" className="h-[5px] w-[5px]" stroke="currentColor" strokeWidth=".8"><path d="m.5.5 4 4M4.500.5l-4 4" /></svg>
                </button>
                Sans titre – 5* @ 93,11 % (CMJN/Aperçu)
              </div>
            </div>
            <div className="flex min-h-0 flex-1">
              <div className="flex min-w-0 flex-1 flex-col">
                <div className="relative flex min-h-0 flex-1 justify-center bg-[#606060] pt-[13px] pl-[2px]">
                  <Artboard />
                  <div className="absolute top-[21px] right-[6px] flex flex-col items-end gap-[14px]">
                    <ColorPalette />
                    <PathfinderPalette />
                  </div>
                </div>
                <StatusBar />
              </div>
              <div className="flex w-[10px] flex-col items-center justify-between bg-[#484848] pt-[2px] pb-[13px] text-[#999]">
                <Chevron dir="up" />
                <span className="h-[18px] w-[10px] rounded-full bg-[#666]" />
                <Chevron />
              </div>
            </div>
          </main>
          <LayersPanel />
        </div>
      </div>
    </div>
  );
}
